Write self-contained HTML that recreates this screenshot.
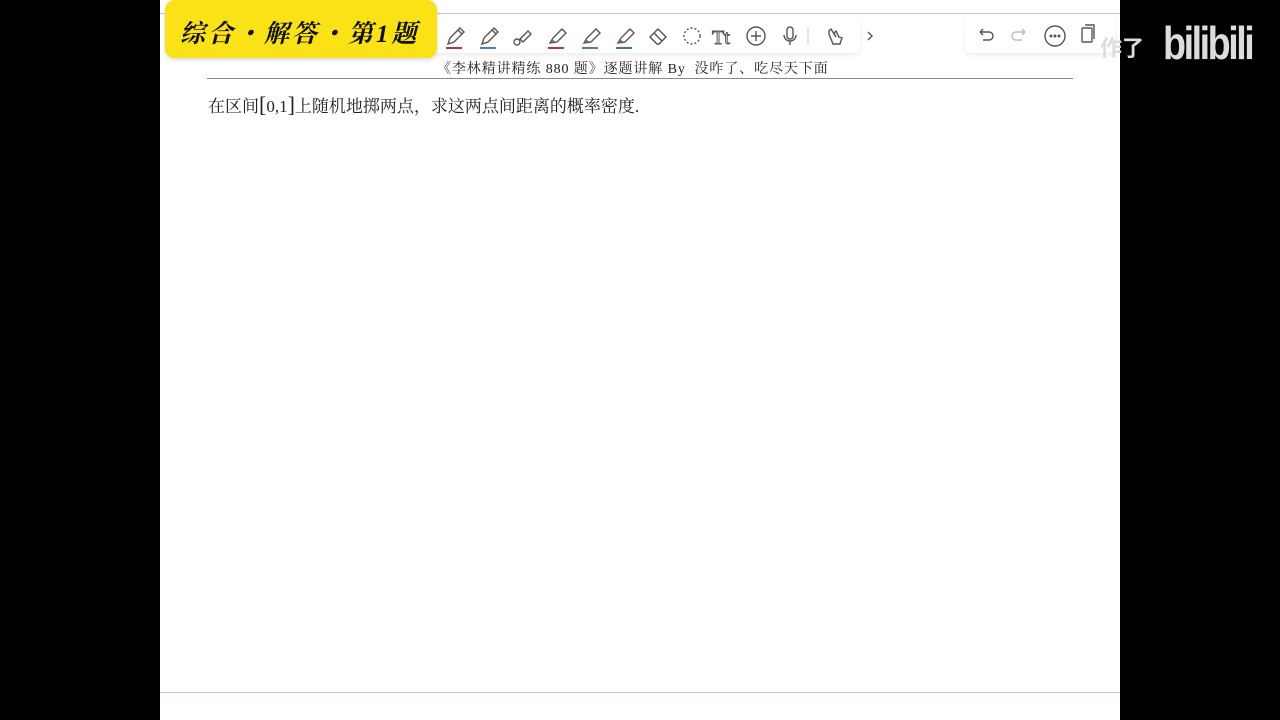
<!DOCTYPE html>
<html><head><meta charset="utf-8"><style>
body{margin:0;width:1280px;height:720px;background:#000;position:relative;overflow:hidden;font-family:"Liberation Serif","Noto Serif CJK SC",serif}
#page{position:absolute;left:160px;top:0;width:960px;height:720px;background:#fff}
.ab{position:absolute}
</style></head><body>
<div id="page"></div>
<div class="ab" style="left:160px;top:13px;width:960px;height:1px;background:#b8c8e0"></div>
<div class="ab" style="left:160px;top:692px;width:960px;height:1px;background:#b8c8e0"></div>
<div class="ab" style="left:430px;top:17px;width:430px;height:36px;background:#fff;box-shadow:0 2px 6px rgba(0,0,0,.08);border-radius:6px"></div>
<div class="ab" style="left:965px;top:17px;width:150px;height:36px;background:#fff;box-shadow:0 2px 6px rgba(0,0,0,.08);border-radius:6px"></div>
<div class="ab" style="left:165px;top:0;width:272px;height:58px;background:#fbe216;border-radius:10px;box-shadow:0 2px 4px rgba(0,0,0,.15)"></div>
<div class="ab" style="left:180px;top:14px;font:bold 25px 'Noto Serif CJK SC',serif;color:#111;letter-spacing:3px;font-style:italic">综合・解答・第<span style="font-family:'Liberation Serif'">1</span>题</div>
<svg class="ab" style="left:440px;top:22px" width="440" height="30" fill="none" stroke="#555" stroke-width="1.4">
<g transform="translate(4,4)"><path d="M4 18l2-6 10-10 4 4-10 10z M14 4l4 4"/><line x1="2" y1="22" x2="18" y2="22" stroke="#c03040" stroke-width="2"/></g>
<g transform="translate(38,4)"><path d="M4 18l2-6 10-10 4 4-10 10z M14 4l4 4"/><line x1="2" y1="22" x2="18" y2="22" stroke="#4a7cc0" stroke-width="2"/></g>
<g transform="translate(72,4)"><circle cx="5" cy="16" r="3"/><path d="M8 13l8-8 3 3-8 8z"/></g>
<g transform="translate(106,4)"><path d="M4 17l3-5 9-9 4 4-9 9z M6 14l3 3"/><line x1="2" y1="22" x2="18" y2="22" stroke="#c03040" stroke-width="2"/></g>
<g transform="translate(140,4)"><path d="M4 17l3-5 9-9 4 4-9 9z M6 14l3 3"/><line x1="2" y1="22" x2="18" y2="22" stroke="#4a7cc0" stroke-width="2"/></g>
<g transform="translate(174,4)"><path d="M4 17l3-5 9-9 4 4-9 9z M6 14l3 3"/><line x1="2" y1="22" x2="18" y2="22" stroke="#3a8a4a" stroke-width="2"/></g>
<g transform="translate(208,4)"><path d="M2 11l8-8 8 8-7 7H9z M6 7l8 8"/></g>
<g transform="translate(242,4)"><circle cx="10" cy="10" r="8" stroke-dasharray="2 2"/></g>
<text x="272" y="22" font-family="Liberation Serif" font-size="20" fill="none" stroke="#555" stroke-width="1">Tt</text>
<g transform="translate(306,4)"><circle cx="10" cy="10" r="9"/><path d="M10 5v10M5 10h10"/></g>
<g transform="translate(340,4)"><rect x="7" y="1" width="6" height="12" rx="3"/><path d="M4 9a6 6 0 0 0 12 0M10 15v4"/></g>
<line x1="368" y1="6" x2="368" y2="22" stroke="#ddd"/>
<g transform="translate(384,4)"><path d="M5 8l4 10h7l2-6-3-1-3-6-2 2 2 4-5-8-2 2z"/></g>
<path d="M428 10l4 4-4 4"/>
</svg>
<svg class="ab" style="left:970px;top:22px" width="150" height="30" fill="none" stroke="#555" stroke-width="1.4">
<path d="M10 10h9a4 4 0 0 1 0 8h-6 M10 10l3-3M10 10l3 3"/>
<path d="M55 10h-9a4 4 0 0 0 0 8h6 M55 10l-3-3M55 10l-3 3" stroke="#bbb"/>
<circle cx="85" cy="14" r="10"/><circle cx="81" cy="14" r=".8"/><circle cx="85" cy="14" r=".8"/><circle cx="89" cy="14" r=".8"/>
<rect x="112" y="6" width="10" height="14" rx="1"/><path d="M115 3h9v14"/>
</svg>
<div class="ab" style="left:1100px;top:31px;font:bold 22px 'Noto Sans CJK SC',sans-serif;color:#ddd">作了</div>
<div class="ab" style="left:1163px;top:16px;font:bold 46px 'Liberation Sans',sans-serif;color:#ddd;letter-spacing:-3px;transform:scaleX(.82);transform-origin:left">bilibili</div>
<div class="ab" style="left:437px;top:58px;font-size:14px;letter-spacing:0.9px;color:#222;white-space:nowrap">《李林精讲精练 880 题》逐题讲解 By &nbsp;没咋了、吃尽天下面</div>
<div class="ab" style="left:207px;top:78px;width:866px;height:1px;background:#888"></div>
<div class="ab" style="left:208px;top:92px;font-size:17px;color:#222;white-space:nowrap">在区间<span style="font-size:22px">[</span>0,1<span style="font-size:22px">]</span>上随机地掷两点，求这两点间距离的概率密度.</div>
</body></html>
